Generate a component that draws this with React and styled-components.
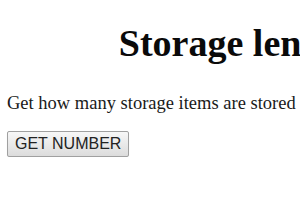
import React from 'react'
import styled, { createGlobalStyle } from 'styled-components'

const GlobalStyle = createGlobalStyle`
  html, body { overflow: hidden; background: #fff; }
  body {
    margin: 0;
    padding: 0 7px;
    font-family: "Liberation Serif", "Times New Roman", serif;
    color: #000;
  }
`

const Page = styled.div`
  width: 459px;
  padding-top: 21px;
`

const Title = styled.h1`
  font-size: 38px;
  font-weight: bold;
  text-align: center;
  margin: 0 0 28px;
  white-space: nowrap;
  color: #0a0a0a;
`

const Text = styled.p`
  font-size: 18.5px;
  margin: 0 0 17px;
  white-space: nowrap;
  color: #1a1a1a;
`

const Button = styled.button`
  font-family: "Liberation Sans", Arial, sans-serif;
  font-size: 16px;
  color: #222;
  padding: 3px 7px;
  border: 1px solid #a0a0a0;
  border-radius: 2px;
  background: linear-gradient(#f7f7f7, #dcdcdc);
  box-shadow: 0 1px 1px rgba(0, 0, 0, 0.08);
  cursor: pointer;
`

function App() {
  return (
    <>
      <GlobalStyle />
      <Page>
        <Title>Storage length</Title>
        <Text>Get how many storage items are stored in localStorage</Text>
        <Button>GET NUMBER</Button>
      </Page>
    </>
  )
}

export default App
